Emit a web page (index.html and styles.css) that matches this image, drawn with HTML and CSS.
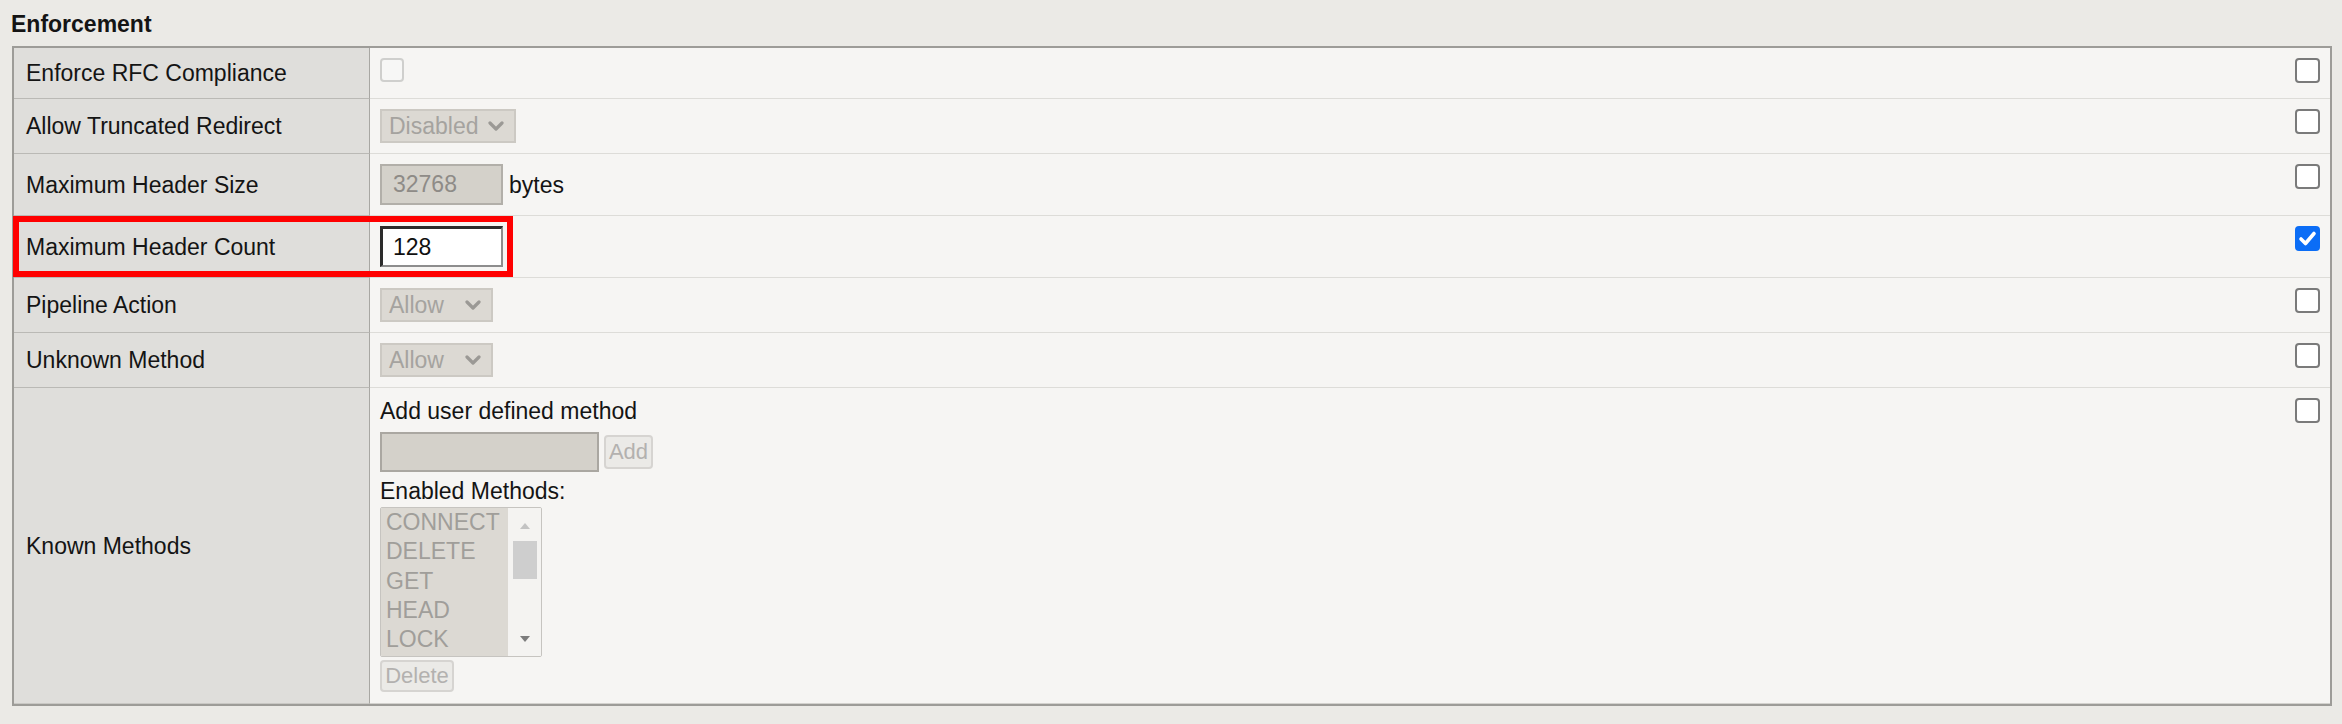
FILE: index.html
```html
<!DOCTYPE html>
<html lang="en">
<head>
<meta charset="utf-8">
<title>Enforcement</title>
<link rel="stylesheet" href="styles.css">
</head>
<body>
<div class="page">
  <h2 class="section-title">Enforcement</h2>
  <div class="table-wrap">
    <div class="props">
      <div class="lbl">Enforce RFC Compliance</div>
      <div class="val"><div class="h30"><span class="cb cb-disabled"></span></div></div>
      <div class="chk"><span class="cb"></span></div>

      <div class="lbl">Allow Truncated Redirect</div>
      <div class="val"><span class="select w136"><span>Disabled</span><svg class="chev" viewBox="0 0 16 10" width="16" height="10"><path d="M2 2 L8 8 L14 2" /></svg></span></div>
      <div class="chk"><span class="cb"></span></div>

      <div class="lbl">Maximum Header Size</div>
      <div class="val"><div class="inline-row"><input class="txt txt-disabled" type="text" value="32768" disabled><span class="unit">bytes</span></div></div>
      <div class="chk"><span class="cb"></span></div>

      <div class="lbl">Maximum Header Count</div>
      <div class="val"><input class="txt txt-active" type="text" value="128"></div>
      <div class="chk"><span class="cb cb-checked"><svg viewBox="0 0 25 25" width="25" height="25"><path d="M6 13 L10.5 17.5 L19 7.5" /></svg></span></div>

      <div class="lbl">Pipeline Action</div>
      <div class="val"><span class="select w113"><span>Allow</span><svg class="chev" viewBox="0 0 16 10" width="16" height="10"><path d="M2 2 L8 8 L14 2" /></svg></span></div>
      <div class="chk"><span class="cb"></span></div>

      <div class="lbl">Unknown Method</div>
      <div class="val"><span class="select w113"><span>Allow</span><svg class="chev" viewBox="0 0 16 10" width="16" height="10"><path d="M2 2 L8 8 L14 2" /></svg></span></div>
      <div class="chk"><span class="cb"></span></div>

      <div class="lbl last">Known Methods</div>
      <div class="val last">
        <div class="methods">
          <div class="line">Add user defined method</div>
          <div class="add-row">
            <input class="add-input" type="text" disabled>
            <button class="btn btn-add" type="button" disabled>Add</button>
          </div>
          <div class="line enabled-label">Enabled Methods:</div>
          <div class="listbox">
            <div class="items">
              <div>CONNECT</div>
              <div>DELETE</div>
              <div>GET</div>
              <div>HEAD</div>
              <div>LOCK</div>
            </div>
            <div class="scroll">
              <svg class="arr arr-up" viewBox="0 0 12 8" width="12" height="8"><path d="M1 7 L6 1 L11 7 Z" /></svg>
              <div class="thumb"></div>
              <div class="spacer"></div>
              <svg class="arr arr-down" viewBox="0 0 12 8" width="12" height="8"><path d="M1 1 L11 1 L6 7 Z" /></svg>
            </div>
          </div>
          <button class="btn btn-del" type="button" disabled>Delete</button>
        </div>
      </div>
      <div class="chk last"><span class="cb"></span></div>
    </div>
    <div class="highlight"></div>
  </div>
</div>
</body>
</html>
```

FILE: styles.css
```css
html, body {
  margin: 0;
  padding: 0;
  background: #ebeae6;
}

body {
  font-family: "Liberation Sans", Arial, sans-serif;
  font-size: 23px;
  color: #141414;
}

.page {
  padding: 11px 0 0 12px;
}

.section-title {
  margin: 0 0 9px -1px;
  font-size: 23px;
  line-height: 26px;
  font-weight: bold;
  color: #141414;
}

.table-wrap {
  position: relative;
  width: 2320px;
}

.props {
  display: grid;
  grid-template-columns: 356px 1fr 45px;
  width: 2320px;
  box-sizing: border-box;
  border: 2px solid #9d9c98;
  background: #f6f5f3;
}

.lbl {
  display: flex;
  align-items: center;
  box-sizing: border-box;
  padding-left: 12px;
  background: #dfdedb;
  border-right: 1px solid #a8a7a3;
  border-bottom: 1px solid #bab9b5;
  line-height: 26px;
}

.val {
  box-sizing: border-box;
  padding: 10px 10px 10px 10px;
  border-bottom: 1px solid #dddcd8;
  line-height: 26px;
}

.chk {
  box-sizing: border-box;
  padding: 10px 10px 0 10px;
  border-bottom: 1px solid #dddcd8;
}

.lbl.last {
  border-bottom: 1px solid #c9c8c4;
}

.val.last,
.chk.last {
  border-bottom: 1px solid #d3d2ce;
}

.val.last {
  padding-bottom: 11px;
}

.h30 {
  height: 30px;
}

/* checkboxes */
.cb {
  display: block;
  width: 25px;
  height: 25px;
  box-sizing: border-box;
  border: 2px solid #7a7a7a;
  border-radius: 4px;
  background: #ffffff;
}

.cb-disabled {
  width: 24px;
  height: 24px;
  border-color: #cfcfcd;
  background: #f7f7f6;
}

.cb-checked {
  border: none;
  background: #0b6df6;
}

.cb-checked svg {
  display: block;
}

.cb-checked path {
  fill: none;
  stroke: #ffffff;
  stroke-width: 3.6;
  stroke-linecap: round;
  stroke-linejoin: round;
}

/* selects */
.select {
  display: flex;
  align-items: center;
  justify-content: space-between;
  box-sizing: border-box;
  height: 34px;
  padding: 0 10px 0 7px;
  background: #dcd9d3;
  border: 2px solid #ccc9c3;
  color: #a5a39f;
  line-height: 26px;
}

.w136 {
  width: 136px;
}

.w113 {
  width: 113px;
}

.chev path {
  fill: none;
  stroke: #9b9995;
  stroke-width: 3.2;
  stroke-linecap: round;
  stroke-linejoin: round;
}

.chev {
  display: block;
}

/* text inputs */
.inline-row {
  display: flex;
  align-items: center;
}

.txt {
  display: block;
  box-sizing: border-box;
  width: 123px;
  height: 41px;
  margin: 0;
  padding: 0 0 0 11px;
  font-family: "Liberation Sans", Arial, sans-serif;
  font-size: 23px;
  outline: none;
}

.txt-disabled {
  background: #d4d1ca;
  border: 2px solid #b2afa9;
  color: #8e8b87;
  -webkit-text-fill-color: #8e8b87;
  opacity: 1;
}

.txt-active {
  background: #ffffff;
  border-style: solid;
  border-width: 3px 2px 2px 3px;
  border-color: #2c2c2c #8d8d8d #8d8d8d #2c2c2c;
  padding-left: 10px;
  color: #101010;
}

.unit {
  margin-left: 6px;
}

/* known methods */
.methods {
  display: flex;
  flex-direction: column;
  align-items: flex-start;
}

.line {
  line-height: 26px;
}

.add-row {
  display: flex;
  align-items: center;
  margin-top: 8px;
}

.add-input {
  display: block;
  box-sizing: border-box;
  width: 219px;
  height: 40px;
  margin: 0;
  background: #d4d1ca;
  border: 2px solid #aaa7a1;
}

.btn {
  display: flex;
  align-items: center;
  justify-content: center;
  box-sizing: border-box;
  margin: 0;
  padding: 0;
  background: #ebeae7;
  border: 2px solid #d6d4d1;
  border-radius: 4px;
  color: #b3b1af;
  font-family: "Liberation Sans", Arial, sans-serif;
  font-size: 22px;
}

.btn-add {
  width: 49px;
  height: 34px;
  margin-left: 5px;
}

.enabled-label {
  margin-top: 6px;
}

.listbox {
  display: flex;
  box-sizing: border-box;
  width: 162px;
  height: 150px;
  margin-top: 3px;
  border: 1px solid #c6c4c0;
  border-radius: 2px;
  overflow: hidden;
}

.items {
  flex: 1;
  background: #dcd9d3;
  padding-left: 5px;
  color: #a09e9a;
  line-height: 29.25px;
}

.scroll {
  display: flex;
  flex-direction: column;
  align-items: center;
  width: 33px;
  background: #f4f3f1;
}

.arr {
  display: block;
}

.arr-up {
  margin-top: 14px;
}

.arr-up path {
  fill: #c3c3c3;
}

.arr-down {
  margin-bottom: 13px;
}

.arr-down path {
  fill: #7c7c7c;
}

.thumb {
  width: 24px;
  height: 38px;
  margin-top: 11px;
  background: #cecece;
}

.spacer {
  flex: 1;
}

.btn-del {
  width: 74px;
  height: 32px;
  margin-top: 3px;
}

/* annotation overlay */
.highlight {
  position: absolute;
  left: 1px;
  top: 170px;
  width: 500px;
  height: 61px;
  box-sizing: border-box;
  border: 6px solid #ff0000;
  pointer-events: none;
}
```
